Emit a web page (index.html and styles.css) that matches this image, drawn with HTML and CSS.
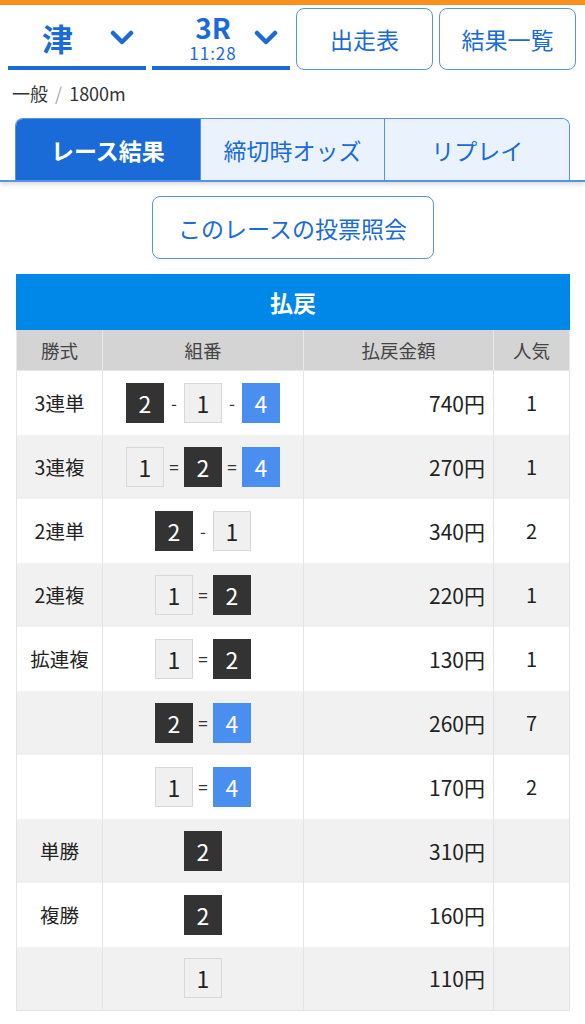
FILE: index.html
```html
<!DOCTYPE html>
<html lang="ja">
<head>
  <meta charset="UTF-8" />
  <meta name="viewport" content="width=device-width, initial-scale=1.0"/>
  <title>レース結果</title>
  <link rel="stylesheet" href="styles.css">
</head>
<body>

  <div class="topbar"><span>レース</span></div>

  <!-- 場・レース選択 -->
  <div class="race-nav">
    <div class="select">
      <span class="place">津</span>
      <svg class="chev" viewBox="0 0 24 16" width="24" height="16"><path d="M3 3 L12 12 L21 3" fill="none" stroke="#1a6ad8" stroke-width="4.5" stroke-linecap="round" stroke-linejoin="round"/></svg>
    </div>
    <div class="select">
      <span class="race">
        <span class="race-no">3R</span>
        <span class="race-time">11:28</span>
      </span>
      <svg class="chev" viewBox="0 0 24 16" width="24" height="16"><path d="M3 3 L12 12 L21 3" fill="none" stroke="#1a6ad8" stroke-width="4.5" stroke-linecap="round" stroke-linejoin="round"/></svg>
    </div>
    <button class="nav-btn">出走表</button>
    <button class="nav-btn">結果一覧</button>
  </div>

  <div class="meta">一般 <span class="slash">/</span> 1800m</div>

  <!-- タブ -->
  <div class="tabs-wrap">
    <div class="tabs">
      <div class="tab active">レース結果</div>
      <div class="tab">締切時オッズ</div>
      <div class="tab">リプレイ</div>
    </div>
  </div>

  <div class="vote">
    <button class="vote-btn">このレースの投票照会</button>
  </div>

  <!-- 払戻 -->
  <table class="payout">
    <colgroup>
      <col class="c-type">
      <col class="c-combo">
      <col class="c-amount">
      <col class="c-pop">
    </colgroup>
    <thead>
      <tr><th class="title" colspan="4">払戻</th></tr>
      <tr class="cols">
        <th>勝式</th>
        <th>組番</th>
        <th>払戻金額</th>
        <th>人気</th>
      </tr>
    </thead>
    <tbody>
      <tr>
        <td class="type">3連単</td>
        <td class="combo"><span class="chip dark">2</span><span class="sep">-</span><span class="chip light">1</span><span class="sep">-</span><span class="chip blue">4</span></td>
        <td class="amount">740円</td>
        <td class="pop">1</td>
      </tr>
      <tr>
        <td class="type">3連複</td>
        <td class="combo"><span class="chip light">1</span><span class="sep">=</span><span class="chip dark">2</span><span class="sep">=</span><span class="chip blue">4</span></td>
        <td class="amount">270円</td>
        <td class="pop">1</td>
      </tr>
      <tr>
        <td class="type">2連単</td>
        <td class="combo"><span class="chip dark">2</span><span class="sep">-</span><span class="chip light">1</span></td>
        <td class="amount">340円</td>
        <td class="pop">2</td>
      </tr>
      <tr>
        <td class="type">2連複</td>
        <td class="combo"><span class="chip light">1</span><span class="sep">=</span><span class="chip dark">2</span></td>
        <td class="amount">220円</td>
        <td class="pop">1</td>
      </tr>
      <tr>
        <td class="type">拡連複</td>
        <td class="combo"><span class="chip light">1</span><span class="sep">=</span><span class="chip dark">2</span></td>
        <td class="amount">130円</td>
        <td class="pop">1</td>
      </tr>
      <tr>
        <td class="type"></td>
        <td class="combo"><span class="chip dark">2</span><span class="sep">=</span><span class="chip blue">4</span></td>
        <td class="amount">260円</td>
        <td class="pop">7</td>
      </tr>
      <tr>
        <td class="type"></td>
        <td class="combo"><span class="chip light">1</span><span class="sep">=</span><span class="chip blue">4</span></td>
        <td class="amount">170円</td>
        <td class="pop">2</td>
      </tr>
      <tr>
        <td class="type">単勝</td>
        <td class="combo"><span class="chip dark">2</span></td>
        <td class="amount">310円</td>
        <td class="pop"></td>
      </tr>
      <tr>
        <td class="type">複勝</td>
        <td class="combo"><span class="chip dark">2</span></td>
        <td class="amount">160円</td>
        <td class="pop"></td>
      </tr>
      <tr>
        <td class="type"></td>
        <td class="combo"><span class="chip light">1</span></td>
        <td class="amount">110円</td>
        <td class="pop"></td>
      </tr>
    </tbody>
  </table>

</body>
</html>
```

FILE: styles.css
```css
body {
  font-family: "Noto Sans CJK JP", "Noto Sans", sans-serif;
  background-color: #fff;
  color: #333;
  margin: 0;
  padding: 0;
}
.topbar {
  height: 5px;
  overflow: hidden;
  background-color: #f7901e;
  text-align: center;
}
.topbar span {
  display: inline-block;
  margin-left: 75px;
  margin-top: -13px;
  font-size: 14px;
  line-height: 14px;
  color: #fff;
}
.race-nav {
  display: flex;
  gap: 6px;
  padding: 3px 8px 0;
}
.select {
  width: 138px;
  height: 62px;
  box-sizing: border-box;
  border-bottom: 4px solid #1a6ad8;
  display: flex;
  align-items: center;
  justify-content: space-between;
  padding: 0 12px 0 30px;
  color: #1a6ad8;
}
.select .chev {
  margin-top: 2px;
}
.place {
  font-size: 31px;
  font-weight: bold;
  padding-left: 4px;
}
.race {
  width: 60px;
  margin-left: 1px;
  display: flex;
  flex-direction: column;
  align-items: center;
}
.race-no {
  font-size: 28px;
  line-height: 31px;
  font-weight: bold;
}
.race-time {
  font-size: 17px;
  line-height: 19px;
  letter-spacing: 1px;
}
.nav-btn {
  width: 137px;
  height: 62px;
  background-color: #fff;
  border: 1.5px solid #5692e6;
  border-radius: 8px;
  color: #1a6ad8;
  font-family: inherit;
  font-size: 23px;
  cursor: pointer;
}
.meta {
  padding: 12px 12px 0;
  font-size: 18px;
  line-height: 22px;
  color: #333;
}
.meta .slash {
  color: #aaa;
  margin: 0 3px;
}
.tabs-wrap {
  margin-top: 14px;
  border-bottom: 2px solid #5692e6;
  box-shadow: 0 3px 4px rgba(0, 0, 0, 0.12);
}
.tabs {
  display: flex;
  margin: 0 15px;
  border: 1px solid #5692e6;
  border-bottom: none;
  border-radius: 8px 8px 0 0;
  overflow: hidden;
}
.tab {
  flex: 1;
  height: 61px;
  display: flex;
  align-items: center;
  justify-content: center;
  background-color: #eaf3fd;
  color: #1a6ad8;
  font-size: 23px;
  border-left: 1px solid #5692e6;
}
.tab:first-child {
  border-left: none;
}
.tab.active {
  background-color: #1a6ad8;
  color: #fff;
  font-weight: bold;
}
.vote {
  display: flex;
  justify-content: center;
  padding-top: 14px;
}
.vote-btn {
  width: 282px;
  height: 63px;
  background-color: #fff;
  border: 1.5px solid #5692e6;
  border-radius: 8px;
  color: #1a6ad8;
  font-family: inherit;
  font-size: 23px;
  cursor: pointer;
}
.payout {
  margin: 15px 16px 0;
  width: 553px;
  border-collapse: collapse;
  table-layout: fixed;
}
.payout th,
.payout td {
  border: 1px solid #e4e4e4;
  padding: 0;
}
.payout tbody td {
  border-top: none;
  border-bottom: none;
}
.payout tbody tr:last-child td {
  border-bottom: 1px solid #e4e4e4;
}
.payout .title {
  height: 54px;
  background-color: #0088e8;
  border-color: #0088e8;
  color: #fff;
  font-size: 23px;
  font-weight: bold;
}
.payout .cols th {
  height: 40px;
  background-color: #d4d4d4;
  color: #444;
  font-size: 18.5px;
  font-weight: normal;
  border-color: #e8e8e8;
}
.c-type { width: 86px; }
.c-combo { width: 201px; }
.c-amount { width: 190px; }
.c-pop { width: 76px; }
.payout tbody tr {
  height: 64px;
}
.payout tbody tr:nth-child(even) {
  background-color: #f1f1f1;
}
.type {
  text-align: center;
  font-size: 19.5px;
  color: #222;
}
.combo {
  text-align: center;
  font-size: 0;
}
.amount {
  text-align: right;
  padding-right: 8px !important;
  font-size: 21px;
  color: #222;
}
.pop {
  text-align: center;
  font-size: 20px;
  color: #222;
}
.chip {
  display: inline-block;
  vertical-align: middle;
  width: 38px;
  height: 40px;
  box-sizing: border-box;
  line-height: 40px;
  font-size: 23px;
  text-align: center;
}
.chip.dark {
  background-color: #333;
  color: #fff;
}
.chip.light {
  background-color: #f0f0f0;
  border: 1px solid #d8d8d8;
  line-height: 38px;
  color: #222;
}
.chip.blue {
  background-color: #4a8ff0;
  color: #fff;
}
.sep {
  display: inline-block;
  vertical-align: middle;
  width: 20px;
  font-size: 17px;
  text-align: center;
  color: #333;
}
```
